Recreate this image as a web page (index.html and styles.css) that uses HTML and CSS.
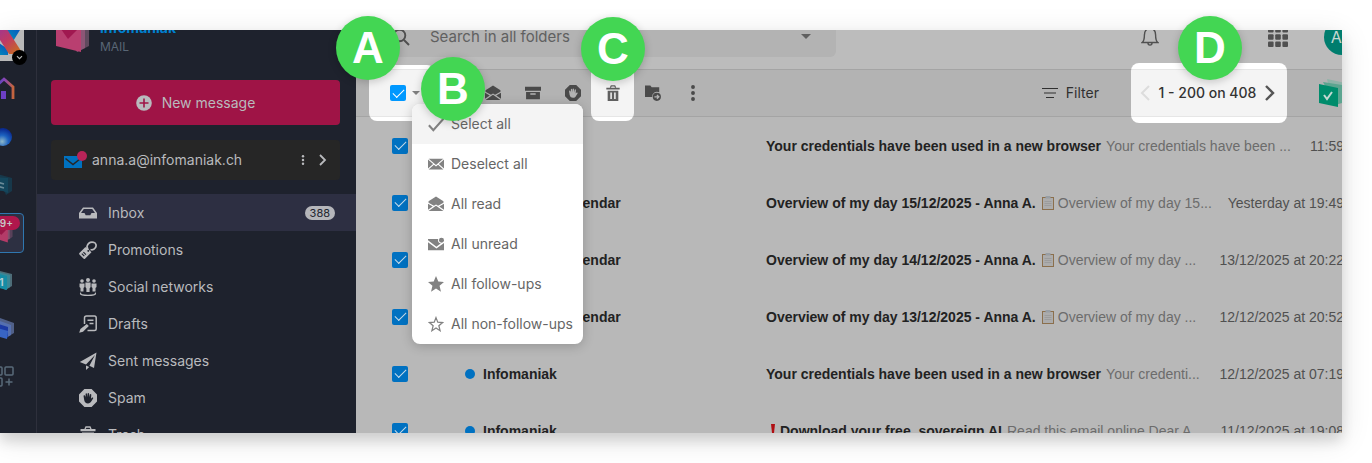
FILE: index.html
```html
<!DOCTYPE html>
<html lang="en">
<head>
  <meta charset="UTF-8" />
  <meta name="viewport" content="width=device-width, initial-scale=1.0"/>
  <title>Infomaniak Mail</title>
  <link rel="stylesheet" href="styles.css">
</head>
<body>
  <svg class="sprite" aria-hidden="true">
    <defs>
      <linearGradient id="gradHome" x1="0" x2="1"><stop offset="0" stop-color="#3a46c8"/><stop offset=".55" stop-color="#8a45b5"/><stop offset="1" stop-color="#c4653c"/></linearGradient>
      <linearGradient id="gradX" x1="0" y1="0" x2="1" y2="1"><stop offset="0" stop-color="#8a35b0"/><stop offset=".55" stop-color="#c03a62"/><stop offset="1" stop-color="#c87a10"/></linearGradient>
      <linearGradient id="gradY" x1="1" y1="0" x2="0" y2="1"><stop offset="0" stop-color="#0a45c0"/><stop offset="1" stop-color="#00a0b8"/></linearGradient>
      <radialGradient id="gradBall" cx=".45" cy=".75" r=".7"><stop offset="0" stop-color="#8fb8c8"/><stop offset=".5" stop-color="#1c62c0"/><stop offset="1" stop-color="#0a2a90"/></radialGradient>
    </defs>
    <symbol id="i-mail" viewBox="0 0 18 18">
      <path fill="currentColor" d="M0 3.900 5.800 9 0 14.200zM18 3.900v10.300L12.200 9zM.8 3h16.400L9 10.200zM6.700 9.800 9 11.800l2.300-2 6 5.400H.7z"/>
    </symbol>
    <symbol id="i-mail-open" viewBox="0 0 18 18">
      <path fill="currentColor" d="M9 .6 17.400 6v1.600L11.300 11 9 9.600 6.700 11 .6 7.600V6zM0 8.800l5.400 3L0 15.400zM18 8.800v6.600l-5.400-3.600zM9 11l8.400 5.800H.6z"/>
    </symbol>
    <symbol id="i-stop" viewBox="0 0 18 18">
      <path fill="currentColor" fill-rule="evenodd" d="M5.400 0h7.200L18 5.400v7.200L12.600 18H5.400L0 12.600V5.400zM5.400 6.200c-.6 0-.9.4-.8 1l.6 3.800c.4 2.200 1.600 3.400 3.800 3.400 1.600 0 2.500-.6 3.200-1.800l1.900-3.100c.5-.9-.6-1.500-1.200-.8l-.9 1 .3-4c0-1-1.300-1.100-1.400-.1l-.4 2.700-.4-3.600c-.1-1-1.500-1-1.500 0v3.500L8 5c-.2-1-1.500-.8-1.400.2l.3 3.400-.6-1.800c-.1-.4-.5-.6-.9-.6z"/>
    </symbol>
    <symbol id="i-trash" viewBox="0 0 18 18">
      <path fill="none" stroke="currentColor" stroke-width="1.400" d="M6 3 7 1h4l1 2"/>
      <path fill="currentColor" fill-rule="evenodd" d="M1.500 3h15v2.200h-15zM3 6.400h12V18H3zM6 8.500v7.200h1.700V8.500zM10.300 8.500v7.200H12V8.500z"/>
    </symbol>
    <symbol id="i-check" viewBox="0 0 18 18">
      <path fill="none" stroke="currentColor" stroke-width="2.400" d="M1 10.500 6 16 17.500 3"/>
    </symbol>
    <symbol id="i-dots" viewBox="0 0 18 18">
      <circle cx="9" cy="2.200" r="2.200" fill="currentColor"/><circle cx="9" cy="9" r="2.200" fill="currentColor"/><circle cx="9" cy="15.800" r="2.200" fill="currentColor"/>
    </symbol>
    <symbol id="i-note" viewBox="0 0 14 14">
      <path fill="#8b6f4c" d="M1 1h12v13H1z"/><path fill="#acacac" d="M2 2h10v11H2z"/><path fill="#989ea4" d="M4.500 0h5v2.500h-5z"/><path fill="none" stroke="#9c9c9c" d="M3.500 5.500h7M3.500 7.500h7M3.500 9.500h7"/>
    </symbol>
  </svg>

  <div class="stage">
    <div class="frame">
      <div class="app">

        <nav class="rail">
          <a class="rail-item account-logo" href="#" aria-label="Account">
            <svg viewBox="0 0 40 40"><path fill="#b9b9b9" d="M0 0h40v40H0z"/><path fill="url(#gradY)" d="M25 4h14L28 22l-8-8z"/><path fill="url(#gradY)" d="M12 20l12 8v6H5z"/><path fill="url(#gradX)" d="M5 2h14l20 31H25z"/></svg>
            <span class="switch"><svg viewBox="0 0 15 15"><path fill="none" stroke="#b5b5b5" stroke-width="1.200" d="m5 6.200 2.500 2.500L10 6.200"/></svg></span>
          </a>
          <a class="rail-item" href="#" aria-label="Home">
            <svg viewBox="0 0 40 40"><path fill="none" stroke="url(#gradHome)" stroke-width="2.800" d="M11 30V18l9-8 9 8v12"/><path fill="#6d3fc4" d="M17 22h5v8h-5z"/></svg>
          </a>
          <a class="rail-item" href="#" aria-label="Euria">
            <svg viewBox="0 0 40 40"><circle cx="19" cy="20" r="9" fill="url(#gradBall)"/></svg>
          </a>
          <a class="rail-item" href="#" aria-label="kChat">
            <svg viewBox="0 0 40 40"><path fill="#17384a" d="m13 9 15 4v13l-6 4z"/><path fill="#14465c" d="m8 12 16 1v15l-5-2-11-1z"/><path fill="none" stroke="#6b8b98" stroke-width="1.500" d="M13 17l7 2M13 21l7 2"/></svg>
          </a>
          <a class="rail-item current" href="#" aria-label="Mail">
            <svg viewBox="0 0 40 40"><path fill="#59415a" d="m14 12 15 2v10l-4 3z"/><path fill="#85506e" d="m11 12 15 2v12l-4 2z"/><path fill="#b43b68" d="m8 11 16 3v16L8 25z"/><path fill="#981848" d="m10 13 14 2-7 7z"/></svg>
            <span class="rail-badge">99+</span>
          </a>
          <a class="rail-item" href="#" aria-label="Calendar">
            <svg viewBox="0 0 40 40"><path fill="#4d6d78" d="m12 9 16 4v12l-5 3z"/><path fill="#3a8796" d="m10 10 16 4v12l-5 3z"/><path fill="#158ca5" d="m6 11 17 4v14L6 25z"/><text class="day" x="9" y="25">21</text></svg>
          </a>
          <a class="rail-item" href="#" aria-label="kDrive">
            <svg viewBox="0 0 40 40"><path fill="#506088" d="m13 8 17 6v10l-5 3z"/><path fill="#5570b0" d="m11 10 16 6v10l-5 3z"/><path fill="#1c3aa4" d="m8 13 16 5v10l-7-3z"/><path fill="#3865c4" d="m6 17 18 5-1 8-17-5z"/></svg>
          </a>
          <a class="rail-item" href="#" aria-label="All apps">
            <svg viewBox="0 0 40 40" fill="none" stroke="#596b7a" stroke-width="1.500"><rect x="10" y="10" width="8" height="8" rx="1"/><rect x="21" y="10" width="8" height="8" rx="1"/><rect x="10" y="21" width="8" height="8" rx="1"/><path d="M25 21.500v7M21.500 25h7"/></svg>
          </a>
        </nav>

        <aside class="sidebar">
          <a class="brand" href="#">
            <svg viewBox="0 0 36 40"><path fill="#5f4a5e" d="m12 8 22 4v20l-8 4z"/><path fill="#8c5676" d="m8 8 22 4v22l-8 4z"/><path fill="#b93f70" d="m1 6 25 5v27L1 32z"/><path fill="#a01850" d="m1 8 24 5-12 12z"/></svg>
            <span class="brand-text"><b>infomaniak</b><small>MAIL</small></span>
          </a>
          <button class="compose" type="button">
            <svg viewBox="0 0 16 16"><circle cx="8" cy="8" r="7.800" fill="currentColor"/><path stroke="#9f1446" stroke-width="1.600" d="M8 3.500v9M3.500 8h9"/></svg>
            New message
          </button>
          <div class="mailbox">
            <svg class="mailbox-icon" viewBox="0 0 24 20"><path fill="#0071bf" d="M0 6h18v12H0z"/><path fill="none" stroke="#262626" stroke-width="1.600" d="m1.500 8.500 7.500 6 7.500-6"/><circle cx="18" cy="6" r="5" fill="#b82458"/></svg>
            <span>anna.a@infomaniak.ch</span>
            <button type="button" aria-label="Mailbox options"><svg viewBox="0 0 18 18"><use href="#i-dots"/></svg></button>
            <button class="next" type="button" aria-label="Open mailbox"><svg viewBox="0 0 10 12"><path fill="none" stroke="currentColor" stroke-width="1.800" d="m2 1 5 5-5 5"/></svg></button>
          </div>
          <ul class="folders">
            <li><a class="active" href="#">
              <svg viewBox="0 0 18 18"><path fill="currentColor" fill-rule="evenodd" d="M4 3.500h10l4 5.500v5.500H0V9zM4.800 5 2 9h3.500l1.200 2.300h4.600L12.500 9H16l-2.800-4z"/></svg>
              <span>Inbox</span><em>388</em></a></li>
            <li><a href="#">
              <svg viewBox="0 0 18 18"><path fill="currentColor" fill-rule="evenodd" d="m7.500 6.200 5 5L6 17.700a1 1 0 0 1-1.300 0L.4 13.400a1 1 0 0 1 0-1.300l5.800-5.800zM9.200 9a.9.900 0 1 0 .1 0zM4 11.500l2.500 2.500.8-.8-2.500-2.500zM2.400 13l2.500 2.500.8-.8-2.500-2.500z"/><path fill="none" stroke="currentColor" stroke-width="1.700" d="M9 9 8 5.500C9 2 12 .8 14.600 1.300c2.600.7 3 3.400 1.900 5.200-1.200 1.800-2.900 2.800-5 2"/></svg>
              <span>Promotions</span></a></li>
            <li><a href="#">
              <svg viewBox="0 0 18 18"><g fill="currentColor"><circle cx="3" cy="3" r="1.800"/><circle cx="9" cy="2" r="2"/><circle cx="15" cy="3" r="1.800"/><path d="M.5 5.400h5V9L4.500 10v3.500h-3V10l-1-1zM6.400 4.600h5.200V9l-1 1.500V14H7.400v-3.500l-1-1.500zM12.500 5.400h5V9l-1 1v3.500h-3V10l-1-1z"/></g><path fill="none" stroke="currentColor" stroke-width="1.300" d="M2 14.800c-2 2 3 2.500 7 2.500s9-.5 7-2.500"/></svg>
              <span>Social networks</span></a></li>
            <li><a href="#">
              <svg viewBox="0 0 18 18"><path fill="none" stroke="currentColor" stroke-width="1.500" d="M5.500 9V3q0-2 2-2h8q1.700 0 1.700 2v11q0 1.500-1.700 1.500H8.500M8.500 5.200h6M10.500 8.500h4"/><path fill="currentColor" d="m7.800 9 2 2L4 16.800l-3.800 1L1.400 14z"/></svg>
              <span>Drafts</span></a></li>
            <li><a href="#">
              <svg viewBox="0 0 18 18"><path fill="currentColor" d="M17.500.5 15 16l-4.600-2.200L16 3 7 12.500.8 10zM7 13.400l3.200 1.500L7 18z"/></svg>
              <span>Sent messages</span></a></li>
            <li><a href="#">
              <svg viewBox="0 0 18 18"><use href="#i-stop"/></svg>
              <span>Spam</span></a></li>
            <li><a href="#">
              <svg viewBox="0 0 18 18"><use href="#i-trash"/></svg>
              <span>Trash</span></a></li>
          </ul>
        </aside>

        <main>
          <header class="topbar">
            <div class="search">
              <svg viewBox="0 0 18 18" fill="none" stroke="currentColor" stroke-width="1.900"><circle cx="7.500" cy="7.500" r="5.800"/><path d="m12 12 5 5"/></svg>
              <input type="search" aria-label="Search in all folders" placeholder="Search in all folders">
              <button type="button" aria-label="Search options"><span class="caret"></span></button>
            </div>
            <div class="tools">
              <button class="bell" type="button" aria-label="Notifications"><svg viewBox="0 0 18 20" fill="none" stroke="currentColor" stroke-width="1.400"><path d="M1.200 15.500c2-1.500 2.200-3.500 2.200-7.500C3.400 4 5.500 1.500 9 1.500S14.600 4 14.600 8c0 4 .2 6 2.200 7.500z"/><path d="M7 16c0 2.800 4 2.800 4 0"/></svg></button>
              <button type="button" aria-label="Applications"><svg class="grid-icon" viewBox="0 0 20 20" fill="currentColor"><rect width="5.600" height="5.600" rx="1"/><rect x="7.200" width="5.600" height="5.600" rx="1"/><rect x="14.400" width="5.600" height="5.600" rx="1"/><rect y="7.200" width="5.600" height="5.600" rx="1"/><rect x="7.200" y="7.200" width="5.600" height="5.600" rx="1"/><rect x="14.400" y="7.200" width="5.600" height="5.600" rx="1"/><rect y="14.400" width="5.600" height="5.600" rx="1"/><rect x="7.200" y="14.400" width="5.600" height="5.600" rx="1"/><rect x="14.400" y="14.400" width="5.600" height="5.600" rx="1"/></svg></button>
              <button type="button" aria-label="Profile"><span class="avatar">AA</span></button>
            </div>
          </header>

          <div class="toolbar">
            <div class="select-all spot">
              <input type="checkbox" aria-label="Select messages" checked>
              <button type="button" aria-label="Selection menu"><span class="caret small"></span></button>
              <ul class="menu">
                <li><button class="hover" type="button"><svg viewBox="0 0 18 18"><use href="#i-check"/></svg>Select all</button></li>
                <li><button type="button"><svg viewBox="0 0 18 18"><use href="#i-mail"/></svg>Deselect all</button></li>
                <li><button type="button"><svg viewBox="0 0 18 18"><use href="#i-mail-open"/></svg>All read</button></li>
                <li><button type="button"><svg viewBox="0 0 18 18"><path fill="currentColor" d="M0 3.500h11.500a3.300 3.300 0 0 0 3 4.700L9.500 12 0 4.900zM0 7l9.500 7L18 8v8H0z"/><circle cx="15.200" cy="4.800" r="2.800" fill="currentColor"/></svg>All unread</button></li>
                <li><button type="button"><svg viewBox="0 0 18 18"><path fill="currentColor" d="m9 0 2.600 6.200 6.400.5-5 4.400 1.600 6.700L9 14.200l-5.600 3.600L5 11.100 0 6.700l6.400-.5z"/></svg>All follow-ups</button></li>
                <li><button type="button"><svg viewBox="0 0 18 18"><path fill="none" stroke="currentColor" stroke-width="1.400" d="m9 1.800 2 5.200 5.400.4-4.200 3.600 1.400 5.500L9 13.400l-4.600 3.100L5.800 11 1.600 7.400 7 7z"/></svg>All non-follow-ups</button></li>
              </ul>
            </div>
            <div class="actions">
              <button type="button" aria-label="Mark as read"><svg viewBox="0 0 18 18"><use href="#i-mail-open"/></svg></button>
              <button type="button" aria-label="Archive"><svg viewBox="0 0 18 18"><path fill="currentColor" fill-rule="evenodd" d="M0 2h18v4.600H0zM1.200 7.800h15.600V16H1.200zM6 9.300V11h6V9.300z"/></svg></button>
              <button type="button" aria-label="Spam"><svg viewBox="0 0 18 18"><use href="#i-stop"/></svg></button>
              <button class="delete spot" type="button" aria-label="Delete"><svg viewBox="0 0 18 18"><use href="#i-trash"/></svg></button>
              <button type="button" aria-label="Move"><svg viewBox="0 0 18 18"><path fill="currentColor" fill-rule="evenodd" d="M0 .5h6L7.500 2.500H16v5.700a5.500 5.500 0 0 0-8 5.300H0z"/><circle cx="13.300" cy="13.300" r="4.600" fill="currentColor"/><path fill="none" stroke="#b3b3b3" stroke-width="1.400" d="M10.600 13.300h4.800M13.400 11.200l2.200 2.100-2.200 2.100"/></svg></button>
              <button type="button" aria-label="More actions"><svg viewBox="0 0 18 18"><use href="#i-dots"/></svg></button>
            </div>
            <button class="filter" type="button"><svg viewBox="0 0 16 12"><path stroke="currentColor" stroke-width="1.200" d="M0 1.500h16M2 6h12M4 10.500h8"/></svg>Filter</button>
            <div class="pager spot">
              <button type="button" aria-label="Previous page" disabled><svg viewBox="0 0 10 16"><path fill="none" stroke="currentColor" stroke-width="2" d="M9 1 2 8l7 7"/></svg></button>
              <span>1 - 200 on 408</span>
              <button type="button" aria-label="Next page"><svg viewBox="0 0 10 16"><path fill="none" stroke="currentColor" stroke-width="2.400" d="m1 1 7 7-7 7"/></svg></button>
            </div>
            <button class="tasks" type="button" aria-label="Tasks"><svg viewBox="0 0 28 30"><path fill="#8fb3a8" d="m9 1 19 4v18H14z"/><path fill="#5ca590" d="m5 4 19 3v18l-7 2z"/><path fill="#008c6c" d="m1 6 19 4v19L1 25z"/><path fill="none" stroke="#c4d8d2" stroke-width="2" d="m6 17 3 4 5-7"/></svg></button>
          </div>

          <ul class="messages">
            <li>
              <input type="checkbox" aria-label="Select message" checked><i class="dot"></i>
              <span class="sender">Infomaniak</span>
              <a class="subject" href="#"><b>Your credentials have been used in a new browser</b><span>Your credentials have been ...</span></a>
              <time>11:59</time>
            </li>
            <li>
              <input type="checkbox" aria-label="Select message" checked><i class="dot"></i>
              <span class="sender">Infomaniak Calendar</span>
              <a class="subject" href="#"><b>Overview of my day 15/12/2025 - Anna A.</b><svg viewBox="0 0 14 14"><use href="#i-note"/></svg><span>Overview of my day 15...</span></a>
              <time>Yesterday at 19:49</time>
            </li>
            <li>
              <input type="checkbox" aria-label="Select message" checked><i class="dot"></i>
              <span class="sender">Infomaniak Calendar</span>
              <a class="subject" href="#"><b>Overview of my day 14/12/2025 - Anna A.</b><svg viewBox="0 0 14 14"><use href="#i-note"/></svg><span>Overview of my day ...</span></a>
              <time>13/12/2025 at 20:22</time>
            </li>
            <li>
              <input type="checkbox" aria-label="Select message" checked><i class="dot"></i>
              <span class="sender">Infomaniak Calendar</span>
              <a class="subject" href="#"><b>Overview of my day 13/12/2025 - Anna A.</b><svg viewBox="0 0 14 14"><use href="#i-note"/></svg><span>Overview of my day ...</span></a>
              <time>12/12/2025 at 20:52</time>
            </li>
            <li>
              <input type="checkbox" aria-label="Select message" checked><i class="dot"></i>
              <span class="sender">Infomaniak</span>
              <a class="subject" href="#"><b>Your credentials have been used in a new browser</b><span>Your credenti...</span></a>
              <time>12/12/2025 at 07:19</time>
            </li>
            <li>
              <input type="checkbox" aria-label="Select message" checked><i class="dot"></i>
              <span class="sender">Infomaniak</span>
              <a class="subject" href="#"><svg class="alert" viewBox="0 0 14 14"><path fill="#b00f14" d="M5 0h4L8 9H6z"/><circle cx="7" cy="12" r="1.700" fill="#b00f14"/></svg><b>Download your free, sovereign AI</b><span>Read this email online Dear A...</span></a>
              <time>11/12/2025 at 19:08</time>
            </li>
          </ul>
        </main>
      </div>
    </div>

    <span class="marker marker-a">A</span>
    <span class="marker marker-b">B</span>
    <span class="marker marker-c">C</span>
    <span class="marker marker-d">D</span>
  </div>
</body>
</html>
```

FILE: styles.css
```css
* {
  box-sizing: border-box;
}

body {
  margin: 0;
  background: #fff;
  color: #505050;
  font-family: Inter, "Liberation Sans", Arial, sans-serif;
  font-size: 14px;
  line-height: 20px;
  overflow: hidden;
}

ul {
  list-style: none;
  margin: 0;
  padding: 0;
}

a {
  color: inherit;
  text-decoration: none;
}

button,
input {
  font: inherit;
  color: inherit;
  background: none;
  border: none;
  margin: 0;
  padding: 0;
}

svg {
  display: block;
  flex: none;
  width: 18px;
  height: 18px;
}

.sprite {
  position: absolute;
  width: 0;
  height: 0;
}

.stage {
  position: relative;
  padding: 30px 30px 30px 0;
}

.frame {
  height: calc(100vh - 60px);
  overflow: hidden;
  background: #b8b8b8;
  box-shadow: 0 8px 12px rgba(0, 0, 0, 0.12), 0 6px 28px rgba(0, 0, 0, 0.12);
}

/* the app runs past the frame on three sides */
.app {
  display: flex;
  margin: -26px -32px 0 -28px;
}

/* left rail */
.rail {
  display: flex;
  flex-direction: column;
  align-items: center;
  gap: 8px;
  width: 65px;
  padding-top: 17px;
  background: #1e222d;
  border-right: 1px solid #2e303c;
}

.rail-item {
  position: relative;
  width: 40px;
  height: 40px;
}

.rail-item svg {
  width: 40px;
  height: 40px;
}

.rail-item.current {
  border: 1px solid #2f77b0;
  border-radius: 4px;
  background: #2d3042;
}

.rail-item.current svg {
  width: 38px;
  height: 38px;
}

.rail-badge {
  position: absolute;
  top: 2px;
  right: 3px;
  padding: 0 7px;
  border-radius: 7px;
  background: #b0174c;
  color: #c8c8c8;
  font-size: 10px;
  font-weight: 600;
  line-height: 14px;
}

.rail-item .switch {
  position: absolute;
  right: -3px;
  bottom: -4px;
  border-radius: 50%;
  background: #000;
}

.rail-item .switch svg {
  width: 15px;
  height: 15px;
}

.day {
  fill: #b5cdd4;
  font-size: 10px;
  font-weight: 700;
}

/* sidebar */
.sidebar {
  width: 319px;
  flex: none;
  padding-top: 8px;
  background: #1e222d;
  color: #b9babd;
}

.brand {
  display: flex;
  align-items: center;
  gap: 9px;
  height: 44px;
  margin: 0 16px 24px 18px;
}

.brand svg {
  width: 36px;
  height: 40px;
}

.brand-text {
  display: flex;
  flex-direction: column;
  padding-top: 6px;
}

.brand-text b {
  color: #0080d0;
  font-size: 14px;
}

.brand-text small {
  color: #596675;
  font-size: 12px;
  line-height: 18px;
}

.compose {
  display: flex;
  align-items: center;
  justify-content: center;
  gap: 10px;
  width: calc(100% - 30px);
  height: 45px;
  margin: 0 16px 15px 14px;
  border-radius: 4px;
  background: #9f1446;
}

.compose svg {
  width: 16px;
  height: 16px;
}

.mailbox {
  display: flex;
  align-items: center;
  height: 40px;
  margin: 0 16px 14px 14px;
  padding: 0 12px 0 13px;
  border-radius: 4px;
  background: #262626;
}

.mailbox span {
  flex: 1;
  margin-left: 4px;
}

.mailbox-icon {
  width: 24px;
  height: 20px;
}

.mailbox button svg {
  width: 10px;
  height: 10px;
}

.mailbox .next {
  margin-left: 10px;
}

.mailbox .next svg {
  height: 12px;
}

.folders a {
  display: flex;
  align-items: center;
  gap: 11px;
  height: 37px;
  padding: 0 21px 0 42px;
}

.folders a.active {
  background: #2d2f42;
}

.folders span {
  flex: 1;
}

.folders em {
  padding: 0 5px;
  border-radius: 7px;
  background: #b5b6ba;
  color: #22252f;
  font-size: 11px;
  font-style: normal;
  line-height: 14px;
}

/* main column */
main {
  flex: 1;
  min-width: 0;
  background: #b8b8b8;
}

.topbar {
  display: flex;
  justify-content: space-between;
  align-items: center;
  height: 65px;
  padding-left: 14px;
  background: #bcbcbc;
}

.search {
  display: flex;
  align-items: center;
  gap: 20px;
  width: 466px;
  height: 40px;
  padding: 0 25px 0 22px;
  border-radius: 6px;
  background: #b3b3b3;
}

.search input {
  flex: 1;
  min-width: 0;
  font-size: 15px;
}

.search input::placeholder {
  color: #606060;
  opacity: 1;
}

.search button {
  display: flex;
}

.caret {
  display: block;
  border: 5px solid transparent;
  border-top-color: #606060;
  border-bottom: none;
}

.caret.small {
  border-width: 4px;
  border-top-color: #808080;
  border-bottom: none;
}

.tools {
  display: flex;
}

.tools button {
  display: flex;
  align-items: center;
  justify-content: center;
  width: 64px;
  height: 40px;
}

.tools .bell {
  margin-right: 64px;
}

.tools .bell svg {
  height: 20px;
}

.tools .grid-icon {
  width: 20px;
  height: 20px;
}

.avatar {
  width: 36px;
  border-radius: 50%;
  background: #007d6e;
  color: #c4d8d2;
  font-size: 16px;
  line-height: 36px;
}

.toolbar {
  display: flex;
  align-items: center;
  height: 48px;
  padding: 0 32px 0 13px;
  background: #b3b3b3;
  border-top: 1px solid #a4a4a4;
  border-bottom: 1px solid #a4a4a4;
}

.toolbar button {
  display: flex;
  align-items: center;
  justify-content: center;
}

/* highlighted controls, taller than the toolbar */
.spot {
  height: 56px;
  border-radius: 8px;
  background: linear-gradient(#fff 4px, #e6e6e6 4px, #e6e6e6 5px, #f4f4f4 5px, #f4f4f4 51px, #e6e6e6 51px, #e6e6e6 52px, #fff 52px);
}

.select-all {
  position: relative;
  display: flex;
  align-items: center;
  gap: 6px;
  flex: none;
  width: 66px;
  margin-right: 38px;
  padding-left: 21px;
}

input[type="checkbox"] {
  appearance: none;
  display: grid;
  place-items: center;
  flex: none;
  width: 16px;
  height: 16px;
  border-radius: 2px;
  background: #0071c1;
  color: #c8dcea;
}

input[type="checkbox"]::after {
  content: "";
  width: 10px;
  height: 5px;
  margin-bottom: 3px;
  border: solid currentColor;
  border-width: 0 0 1px 1px;
  rotate: -45deg;
}

.select-all input[type="checkbox"] {
  background: #0098ff;
  color: #fff;
}

.actions {
  display: flex;
  align-items: center;
  color: #4a4a4a;
}

.actions button {
  width: 40px;
  height: 40px;
}

.actions svg {
  width: 16px;
  height: 16px;
}

.actions .delete {
  width: 43px;
  height: 56px;
  margin: 0 -1px 0 -2px;
  color: #606060;
}

.filter {
  gap: 8px;
  margin: 0 32px 0 auto;
  color: #303030;
}

.filter svg {
  width: 16px;
  height: 12px;
}

.pager {
  display: flex;
  align-items: center;
  justify-content: space-between;
  flex: none;
  width: 156px;
  height: 60px;
  padding: 0 12px 0 9px;
  background: linear-gradient(#fff 6px, #e6e6e6 6px, #e6e6e6 7px, #f4f4f4 7px, #f4f4f4 53px, #e6e6e6 53px, #e6e6e6 54px, #fff 54px);
  color: #333;
  font-weight: 500;
}

.pager svg {
  width: 10px;
  height: 16px;
}

.pager button {
  color: #555;
}

.pager button:disabled {
  color: #dcdcdc;
}

.tasks {
  margin-left: 31px;
}

.tasks svg {
  width: 28px;
  height: 30px;
  margin-right: -4px;
}

/* selection menu */
.menu {
  position: absolute;
  z-index: 1;
  top: 39px;
  left: 43px;
  width: 171px;
  overflow: hidden;
  border-radius: 8px;
  background: #fff;
  color: #666;
  box-shadow: 0 2px 12px rgba(0, 0, 0, 0.2);
}

.menu button {
  justify-content: flex-start;
  gap: 7px;
  width: 100%;
  height: 40px;
  padding-left: 16px;
  white-space: nowrap;
}

.menu svg {
  width: 16px;
  height: 16px;
  color: #828282;
}

.menu .hover {
  background: #f4f4f4;
}

/* message list */
.messages {
  font-family: "Liberation Sans", Arial, sans-serif;
}

.messages li {
  display: flex;
  align-items: center;
  height: 57px;
  padding: 0 30px 0 36px;
  white-space: nowrap;
}

.dot {
  width: 10px;
  height: 10px;
  margin: 0 8px 0 57px;
  border-radius: 50%;
  background: #0071c1;
}

.sender {
  width: 283px;
  color: #222;
  font-weight: 700;
}

.subject {
  display: flex;
  align-items: center;
  flex: 1;
  min-width: 0;
  color: #6c6c6c;
}

.subject b {
  margin-right: 5px;
  color: #222;
}

.subject svg {
  width: 14px;
  height: 14px;
  margin-right: 3px;
}

.subject .alert {
  margin-right: 0;
}

/* lettered markers */
.marker {
  position: absolute;
  z-index: 2;
  width: 64px;
  border-radius: 50%;
  background: #43d653;
  box-shadow: 0 2px 8px rgba(0, 0, 0, 0.2);
  color: #fff;
  font-family: "Liberation Sans", Arial, sans-serif;
  font-size: 44px;
  font-weight: 700;
  line-height: 64px;
  text-align: center;
}

.marker-a {
  top: 16px;
  left: 336px;
}

.marker-b {
  top: 57px;
  left: 421px;
}

.marker-c {
  top: 17px;
  left: 581px;
}

.marker-d {
  top: 16px;
  right: 130px;
}
```
